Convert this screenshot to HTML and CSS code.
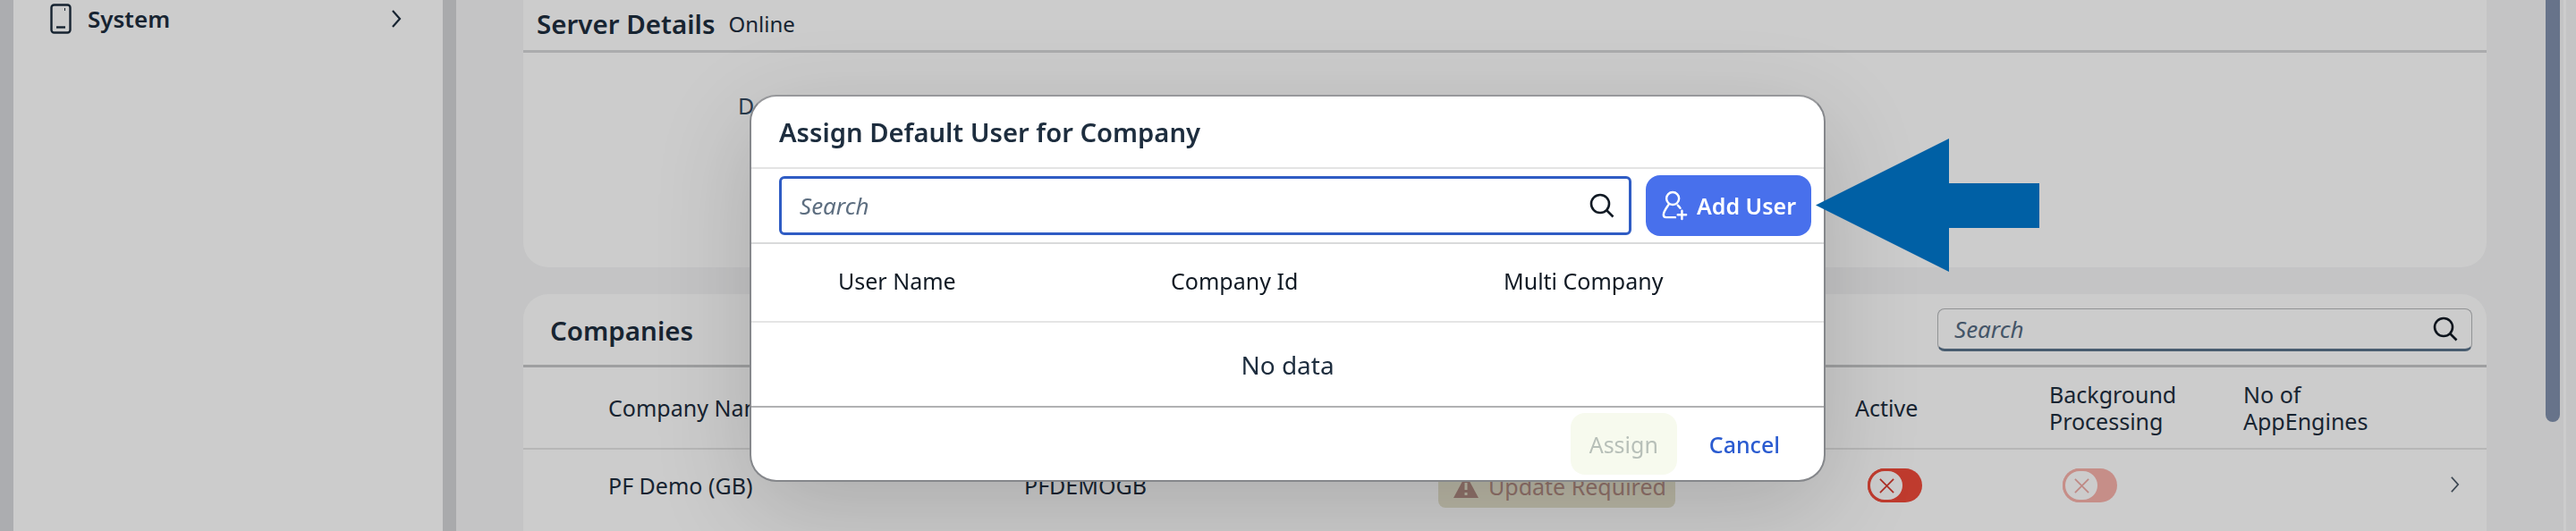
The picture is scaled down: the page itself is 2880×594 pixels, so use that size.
FILE: index.html
```html
<!DOCTYPE html>
<html lang="en">
<head>
<meta charset="utf-8">
<title>Assign Default User for Company</title>
<link rel="stylesheet" href="styles.css">
</head>
<body>
<div class="page">
  <div class="edge"></div>
  <aside class="sidebar">
    <div class="nav-item">
      <svg class="nav-icon" viewBox="0 0 24 34" fill="none" stroke="#1d2d3e" stroke-width="2.4"><rect x="1.5" y="1.5" width="21" height="31" rx="3"/><path d="M7 26.500h10"/><path d="M16 6.500h1" stroke-width="3"/></svg>
      <span class="nav-label">System</span>
      <svg class="nav-chevron" viewBox="0 0 12 22" fill="none" stroke="#1d2d3e" stroke-width="2.200"><path d="M2 2l8 9-8 9"/></svg>
    </div>
  </aside>
  <div class="divider"></div>
  <main class="main">
    <section class="panel-head">
      <h2 class="server-title">Server Details</h2>
      <span class="server-status">Online</span>
    </section>
    <section class="panel-body">
      <span class="field-label">D</span>
    </section>
    <section class="companies">
      <div class="companies-bar">
        <h2 class="companies-title">Companies</h2>
        <div class="table-search">
          <span class="search-text">Search</span>
          <svg class="search-icon" viewBox="0 0 30 30" fill="none" stroke="#111a24" stroke-width="2.600"><circle cx="13" cy="13" r="10"/><path d="M20.500 20.500l7 7"/></svg>
        </div>
      </div>
      <div class="table-row table-head">
        <span class="cell-name">Company Name</span>
        <span class="cell-id"></span>
        <span class="cell-status"></span>
        <span class="cell-active">Active</span>
        <span class="cell-bg">Background<br>Processing</span>
        <span class="cell-engines">No of<br>AppEngines</span>
      </div>
      <div class="table-row table-data">
        <span class="cell-name">PF Demo (GB)</span>
        <span class="cell-id">PFDEMOGB</span>
        <span class="cell-status">
          <span class="badge">
            <svg class="badge-icon" viewBox="0 0 30 28"><path d="M15 1L29 27H1z" fill="#b28c84"/><path d="M15 10v8M15 21v3" stroke="#e6e3cd" stroke-width="3"/></svg>
            Update Required
          </span>
        </span>
        <span class="cell-active">
          <span class="toggle">
            <span class="knob"><svg class="knob-x" viewBox="0 0 20 20" fill="none" stroke="#d93a2e" stroke-width="1.800"><path d="M2 2l16 16M18 2L2 18"/></svg></span>
          </span>
        </span>
        <span class="cell-bg">
          <span class="toggle toggle-off">
            <span class="knob"><svg class="knob-x" viewBox="0 0 20 20" fill="none" stroke="#d93a2e" stroke-width="1.800"><path d="M2 2l16 16M18 2L2 18"/></svg></span>
          </span>
        </span>
        <span class="cell-engines"></span>
        <svg class="row-chevron" viewBox="0 0 12 22" fill="none" stroke="#4d5a68" stroke-width="2"><path d="M2 2l8 9-8 9"/></svg>
      </div>
    </section>
  </main>
  <div class="scroll-col">
    <div class="scroll-thumb"></div>
  </div>
  <div class="scroll-gap"></div>
</div>

<div class="overlay"></div>

<div class="dialog" role="dialog">
  <header class="dialog-head">Assign Default User for Company</header>
  <div class="dialog-tools">
    <div class="dialog-search">
      <span class="dialog-search-text">Search</span>
      <svg class="search-icon" viewBox="0 0 30 30" fill="none" stroke="#111a24" stroke-width="2.600"><circle cx="13" cy="13" r="10"/><path d="M20.500 20.500l7 7"/></svg>
    </div>
    <button class="add-user" type="button">
      <svg class="add-icon" viewBox="0 0 32 36" fill="none" stroke="#fff" stroke-width="2.600" stroke-linecap="round"><circle cx="14" cy="9.500" r="7.500"/><path d="M9 17c-2 3-6 8-6 12 0 2 1 3 3 3h11M20 17.500c1 1 2 2 3 3.500"/><path d="M25 24v10M20 29h10"/></svg>
      Add User
    </button>
  </div>
  <div class="dialog-cols">
    <span class="col-user">User Name</span>
    <span class="col-company">Company Id</span>
    <span class="col-multi">Multi Company</span>
  </div>
  <div class="dialog-empty">No data</div>
  <footer class="dialog-foot">
    <button class="btn-assign" type="button">Assign</button>
    <button class="btn-cancel" type="button">Cancel</button>
  </footer>
</div>

<svg class="arrow" viewBox="0 0 250 149"><path d="M0 74.500L149 0V50H250V100H149V149Z" fill="#0060a5"/></svg>
</body>
</html>
```
FILE: styles.css
```css
* { box-sizing: border-box; }
html, body { margin: 0; padding: 0; width: 2880px; height: 594px; overflow: hidden; }
body { font-family: "Noto Sans", "Open Sans", sans-serif; color: #1d2d3e; background: #f5f6f7; }
h2 { margin: 0; }
button { font-family: inherit; border: 0; padding: 0; }

.page { display: flex; width: 2880px; height: 594px; overflow: hidden; }
.edge { width: 15px; background: #d8d9dc; flex: none; }
.sidebar { width: 480px; flex: none; background: #ffffff; }
.divider { width: 15px; flex: none; background: #d4d5d8; }

.nav-item { display: flex; align-items: center; height: 42px; padding-left: 41px; }
.nav-icon { width: 24px; height: 34px; flex: none; }
.nav-label { margin-left: 18px; font-size: 26px; font-weight: 600; }
.nav-chevron { width: 12px; height: 22px; margin-left: 247px; flex: none; }

.main { width: 2336px; flex: none; padding: 0 66px 0 75px; background: #f5f6f7; display: flex; flex-direction: column; }
.panel-head { height: 59px; flex: none; background: #fff; border-bottom: 3px solid #d6d7d9; display: flex; align-items: center; padding: 0 0 4px 15px; }
.server-title { font-size: 29.500px; font-weight: 600; }
.server-status { font-size: 24px; margin-left: 15px; }
.panel-body { height: 240px; flex: none; background: #fff; border-radius: 0 0 28px 28px; padding: 42px 0 0 240px; }
.field-label { font-size: 25px; color: #354a5f; }

.companies { margin-top: 30px; flex: 1; background: #fff; border-radius: 28px 28px 0 0; }
.companies-bar { height: 82px; display: flex; align-items: center; justify-content: space-between; padding: 0 16px 0 30px; border-bottom: 3px solid #c6c7c9; }
.companies-title { font-size: 29.500px; font-weight: 600; padding-top: 2px; }
.table-search { width: 598px; height: 48px; border: 1px solid #b6b8bb; border-bottom: 3px solid #5b738b; border-radius: 8px; background: #fff; display: flex; align-items: center; justify-content: space-between; padding: 0 14px 0 18px; }
.search-text { font-size: 26px; font-style: italic; color: #556b82; }
.search-icon { width: 30px; height: 30px; flex: none; }

.table-row { display: grid; grid-template-columns: 465px 463px 466px 217px 217px 236px 24px; padding-left: 95px; align-items: center; }
.table-head { height: 92px; border-bottom: 2px solid #e5e5e5; font-size: 25px; line-height: 30px; }
.table-data { height: 80px; font-size: 25px; }
.badge { display: inline-flex; align-items: center; gap: 10px; height: 47px; width: 265px; padding-left: 16px; background: #e6e3cd; color: #b28c84; font-size: 25px; border-radius: 8px; margin-top: 2px; }
.badge-icon { width: 30px; height: 28px; flex: none; }
.toggle { display: block; width: 61px; height: 38px; margin-left: 14px; border-radius: 19px; background: #ef4a3a; padding: 0; }
.toggle-off { opacity: .42; margin-left: 15px; }
.knob { display: flex; align-items: center; justify-content: center; width: 42px; height: 38px; background: #fff; border: 3px solid #ef4a3a; border-radius: 19px; }
.knob-x { width: 19px; height: 19px; }
.row-chevron { width: 11px; height: 22px; justify-self: start; margin-left: -5px; margin-top: -2px; }

.scroll-col { width: 20px; flex: none; background: #f5f6f7; }
.scroll-thumb { width: 16px; height: 472px; background: #8190ad; border-radius: 0 0 8px 8px; }
.scroll-gap { flex: 1; background: #f5f6f7; border-left: 3px solid #ffffff; }

.overlay { position: fixed; inset: 0; background: rgba(0, 0, 0, .2); }

.dialog { position: absolute; left: 838px; top: 106px; width: 1203px; height: 433px; background: #fff; border: 2px solid #85878b; border-top-color: #97989b; border-radius: 30px; box-shadow: 0 30px 110px rgba(0, 0, 0, .16); display: flex; flex-direction: column; overflow: hidden; }
.dialog-head { height: 81px; flex: none; display: flex; align-items: center; padding: 0 0 0 31px; font-size: 29.200px; font-weight: 600; border-bottom: 2px solid #e4e4e4; }
.dialog-tools { height: 84px; flex: none; display: flex; align-items: center; gap: 16px; padding: 0 15px 0 31px; border-bottom: 2px solid #d9dadb; }
.dialog-search { width: 953px; height: 66px; flex: none; border: 3px solid #2f5cc4; border-radius: 6px; display: flex; align-items: center; justify-content: space-between; padding: 0 15px 0 20px; }
.dialog-search-text { font-size: 26px; font-style: italic; color: #5d6e80; }
.add-user { width: 185px; height: 68px; flex: none; display: flex; align-items: center; justify-content: center; gap: 10px; background: #4870ec; color: #fff; font-size: 25px; font-weight: 600; border-radius: 16px; }
.add-icon { width: 30px; height: 34px; flex: none; }
.dialog-cols { height: 88px; flex: none; display: grid; grid-template-columns: 372px 372px 1fr; padding: 0 0 5px 97px; align-items: center; font-size: 25px; color: #111a24; border-bottom: 2px solid #e5e5e5; }
.dialog-empty { height: 95px; flex: none; display: flex; align-items: center; justify-content: center; font-size: 28px; border-bottom: 2px solid #b0b1b3; }
.dialog-foot { flex: 1; display: flex; align-items: center; justify-content: flex-end; gap: 36px; padding-right: 49px; }
.btn-assign { width: 119px; height: 69px; background: #f7faee; color: #b7bfb8; font-size: 25px; border-radius: 16px; }
.btn-cancel { background: none; color: #2a5bd0; font-size: 25px; font-weight: 500; }

.arrow { position: absolute; left: 2030px; top: 155px; width: 250px; height: 149px; }
```
